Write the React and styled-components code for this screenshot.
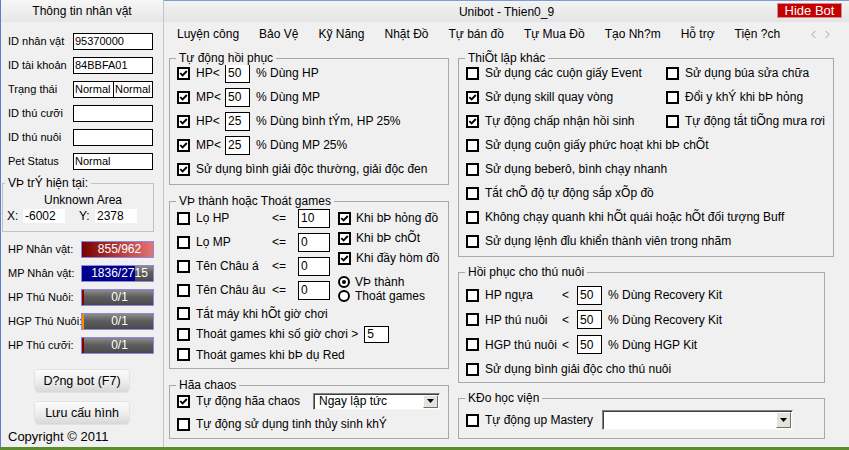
import React from 'react';
import styled, { createGlobalStyle } from 'styled-components';
import { ChevronLeft, ChevronRight } from 'lucide-react';

const GlobalStyle = createGlobalStyle`
  html, body { margin: 0; padding: 0; }
  body {
    background: #5d8c2c;
    font-family: "Liberation Sans", Arial, sans-serif;
    font-size: 12px;
    color: #000;
  }
`;

const tabs = ['Luyện công', 'Bảo Vệ', 'Kỹ Năng', 'Nhặt Đồ', 'Tự bán đồ', 'Tự Mua Đồ', 'Tạo Nh?m', 'Hỗ trợ', 'Tiện ?ch'];

const infoRows = [
  { label: 'ID nhân vật', values: ['95370000'] },
  { label: 'ID tài khoản', values: ['84BBFA01'] },
  { label: 'Trạng thái', values: ['Normal', 'Normal'] },
  { label: 'ID thú cưỡi', values: [''] },
  { label: 'ID thú nuôi', values: [''] },
  { label: 'Pet Status', values: ['Normal'] },
];

const bars = [
  { label: 'HP Nhân vật:', text: '855/962', fill: 100, color: 'linear-gradient(90deg, #780000, #e47474)' },
  { label: 'MP Nhân vật:', text: '1836/2715', fill: 75, color: '#00008c' },
  { label: 'HP Thú Nuôi:', text: '0/1', fill: 3, color: '#8a0000' },
  { label: 'HGP Thú Nuôi:', text: '0/1', fill: 3, color: '#ff8a00' },
  { label: 'HP Thú cưỡi:', text: '0/1', fill: 3, color: '#8a0000' },
];

const recover = [
  { label: 'HP<', value: '50', text: '% Dùng HP' },
  { label: 'MP<', value: '50', text: '% Dùng MP' },
  { label: 'HP<', value: '25', text: '% Dùng bình tÝm, HP 25%' },
  { label: 'MP<', value: '25', text: '% Dùng MP 25%' },
];

const potions = [
  { label: 'Lọ HP', value: '10' },
  { label: 'Lọ MP', value: '0' },
  { label: 'Tên Châu á', value: '0' },
  { label: 'Tên Châu âu', value: '0' },
];

const settings = [
  { text: 'Sử dụng các cuộn giấy Event', on: false },
  { text: 'Sử dụng búa sửa chữa', on: false },
  { text: 'Sử dụng skill quay vòng', on: true },
  { text: 'Đổi y khÝ khi bÞ hỏng', on: false },
  { text: 'Tự động chấp nhận hồi sinh', on: true },
  { text: 'Tự động tắt tiÕng mưa rơi', on: false },
  { text: 'Sử dụng cuộn giấy phức hoạt khi bÞ chÕt', on: false, wide: true },
  { text: 'Sử dụng beberô, bình chạy nhanh', on: false, wide: true },
  { text: 'Tắt chÕ độ tự động sắp xÕp đồ', on: false, wide: true },
  { text: 'Không chạy quanh khi hÕt quái hoặc  hÕt đối tượng Buff', on: false, wide: true },
  { text: 'Sử dụng lệnh đỉu khiển thành viên trong nhãm', on: false, wide: true },
];

const petRows = [
  { label: 'HP ngựa', text: '% Dùng Recovery Kit', h: 24 },
  { label: 'HP thú nuôi', text: '% Dùng Recovery Kit', h: 25 },
  { label: 'HGP thú nuôi', text: '% Dùng HGP Kit', h: 25 },
];

function Check({ on }) {
  return (
    <Box>
      {on && (
        <svg width="9" height="9" viewBox="0 0 9 9">
          <path d="M1.3 4.2 L3.6 6.5 L7.8 2" fill="none" stroke="#000" strokeWidth="1.9" />
        </svg>
      )}
    </Box>
  );
}

function Radio({ on }) {
  return <RadioDot $on={on} />;
}

function Combo({ w, h, value }) {
  return (
    <Select $w={w} $h={h}>
      <span>{value}</span>
      <DropBtn>
        <svg width="7" height="4" viewBox="0 0 7 4">
          <polygon points="0,0 7,0 3.5,4" fill="#000" />
        </svg>
      </DropBtn>
    </Select>
  );
}

function App() {
  return (
    <>
      <GlobalStyle />
      <Window>
        <LeftPanel>
          <LeftHeader>Thông tin nhân vật</LeftHeader>
          <InfoList>
            {infoRows.map((r, i) => (
              <InfoRow key={i}>
                <InfoLabel>{r.label}</InfoLabel>
                {r.values.map((v, j) => (
                  <TextBox key={j} $small $w={80 / r.values.length + (r.values.length > 1 && j === 0 ? 1 : 0)} $h={17}>{v}</TextBox>
                ))}
              </InfoRow>
            ))}
          </InfoList>
          <PosBox>
            <Legend $left={2}>VÞ trÝ hiện tại:</Legend>
            <AreaName>Unknown Area</AreaName>
            <CoordRow>
              <CoordLabel>X:</CoordLabel>
              <CoordValue>-6002</CoordValue>
              <CoordLabel $gap>Y:</CoordLabel>
              <CoordValue>2378</CoordValue>
            </CoordRow>
          </PosBox>
          <BarList>
            {bars.map((b, i) => (
              <InfoRow key={i}>
                <BarLabel>{b.label}</BarLabel>
                <BarTrack>
                  <BarFill $bg={b.color} style={{ width: b.fill + '%' }} />
                  <BarText>{b.text}</BarText>
                </BarTrack>
              </InfoRow>
            ))}
          </BarList>
          <ButtonStack>
            <Btn>D?ng bot (F7)</Btn>
            <Btn>Lưu cấu hình</Btn>
          </ButtonStack>
          <Copyright>Copyright © 2011</Copyright>
        </LeftPanel>

        <Main>
          <TitleBar>
            <span />
            <Title>Unibot - Thien0_9</Title>
            <HideBot>Hide Bot</HideBot>
          </TitleBar>
          <TabBar>
            {tabs.map((t) => (
              <Tab key={t}>{t}</Tab>
            ))}
            <Arrows>
              <ChevronLeft size={13} strokeWidth={1.4} color="#888" />
              <ChevronRight size={13} strokeWidth={1.4} color="#888" />
            </Arrows>
          </TabBar>

          <Content>
            <Column $w={280} $gap={16}>
              <Group $pad="2px 7px 3px">
                <Legend>Tự động hồi phục</Legend>
                {recover.map((r, i) => (
                  <Row key={i} $h={24}>
                    <Check on />
                    <Label $w={23}>{r.label}</Label>
                    <TextBox $w={25} $h={19}>{r.value}</TextBox>
                    <span>{r.text}</span>
                  </Row>
                ))}
                <Row $h={24}>
                  <Check on />
                  <span>Sử dụng bình giải độc thường, giải độc đen</span>
                </Row>
              </Group>

              <Group $pad="4px 7px 3px">
                <Legend>VÞ thành hoặc Thoát games</Legend>
                <Split>
                  <div>
                    {potions.map((p, i) => (
                      <Row key={i} $h={24}>
                        <Check />
                        <Label $w={70}>{p.label}</Label>
                        <Label $w={20}>&lt;=</Label>
                        <TextBox $w={32} $h={19}>{p.value}</TextBox>
                      </Row>
                    ))}
                  </div>
                  <SideList>
                    <Row $h={20} $gap={5}><Check on /><span>Khi bÞ hỏng đồ</span></Row>
                    <Row $h={20} $gap={5}><Check on /><span>Khi bÞ chÕt</span></Row>
                    <Row $h={20} $gap={5}><Check on /><span>Khi đầy hòm đồ</span></Row>
                    <RadioGroup>
                      <Row $h={14} $gap={5}><Radio on /><span>VÞ thành</span></Row>
                      <Row $h={14} $gap={5}><Radio /><span>Thoát games</span></Row>
                    </RadioGroup>
                  </SideList>
                </Split>
                <Row $h={21}>
                  <Check />
                  <span>Tắt máy khi hÕt giờ chơi</span>
                </Row>
                <Row $h={20}>
                  <Check />
                  <span>Thoát games khi số giờ chơi &gt;</span>
                  <TextBox $w={25} $h={17}>5</TextBox>
                </Row>
                <Row $h={21}>
                  <Check />
                  <span>Thoát games khi bÞ dụ Red</span>
                </Row>
              </Group>

              <Group $pad="3px 7px 3px">
                <Legend>Hãa chaos</Legend>
                <Row $h={24}>
                  <Check on />
                  <Label $w={111}>Tự động hãa chaos</Label>
                  <Combo w={127} h={17} value="Ngay lập tức" />
                </Row>
                <Row $h={22}>
                  <Check />
                  <span>Tự động sử dụng tinh thủy sinh khÝ</span>
                </Row>
              </Group>
            </Column>

            <Column $w={376} $gap={15}>
              <Group $pad="2px 7px 3px">
                <Legend>ThiÕt lập khác</Legend>
                <SettingsGrid>
                  {settings.map((s, i) => (
                    <Row key={i} $h={24} $wide={s.wide}>
                      <Check on={s.on} />
                      <span>{s.text}</span>
                    </Row>
                  ))}
                </SettingsGrid>
              </Group>

              <Group $pad="10px 7px 1px" $mr={9}>
                <Legend>Hồi phục cho thú nuôi</Legend>
                {petRows.map((p, i) => (
                  <Row key={i} $h={p.h}>
                    <Check />
                    <Label $w={71}>{p.label}</Label>
                    <Label $w={9}>&lt;</Label>
                    <TextBox $w={25} $h={19}>50</TextBox>
                    <span>{p.text}</span>
                  </Row>
                ))}
                <Row $h={24}>
                  <Check />
                  <span>Sử dụng bình giải độc cho thú nuôi</span>
                </Row>
              </Group>

              <Group $pad="9px 7px 6px" $mr={9}>
                <Legend>KÐo học viện</Legend>
                <Row $h={24}>
                  <Check />
                  <Label $w={111}>Tự động up Mastery</Label>
                  <Combo w={191} h={20} value="" />
                </Row>
              </Group>
            </Column>
          </Content>
        </Main>
      </Window>
    </>
  );
}

export default App;

const Window = styled.div`
  width: 849px;
  height: 447px;
  box-sizing: border-box;
  display: flex;
  background: #f0f0f0;
  border-left: 1px solid #5b7fc7;
  overflow: hidden;
`;

const LeftPanel = styled.div`
  width: 163px;
  flex: none;
  box-sizing: border-box;
  border-right: 1px solid #c4c4c4;
  display: flex;
  flex-direction: column;
`;

const LeftHeader = styled.div`
  height: 22px;
  display: flex;
  align-items: center;
  justify-content: center;
  background: linear-gradient(#f7f7f7, #e6e6e6);
  font-size: 12px;
`;

const InfoList = styled.div`
  padding-top: 7px;
`;

const InfoRow = styled.div`
  height: 24px;
  display: flex;
  align-items: center;
  padding-left: 7px;
`;

const InfoLabel = styled.span`
  width: 65px;
  flex: none;
  font-size: 11px;
  white-space: nowrap;
`;

const TextBox = styled.div`
  width: ${(p) => p.$w}px;
  height: ${(p) => p.$h}px;
  flex: none;
  box-sizing: border-box;
  border: 1px solid #000;
  background: #fff;
  padding-left: ${(p) => (p.$small ? 1 : 2)}px;
  font-size: ${(p) => (p.$small ? 11 : 12)}px;
  display: flex;
  align-items: center;
  white-space: nowrap;
  overflow: hidden;
  & + & { margin-left: -1px; }
`;

const PosBox = styled.div`
  position: relative;
  margin: 10px 0 0 1px;
  width: 152px;
  box-sizing: border-box;
  border: 1px solid #c2c2c2;
  padding: 9px 0 8px;
`;

const Legend = styled.span`
  position: absolute;
  top: -8px;
  left: ${(p) => p.$left ?? 6}px;
  padding: 0 3px;
  background: #f0f0f0;
  line-height: 14px;
  white-space: nowrap;
`;

const AreaName = styled.div`
  line-height: 14px;
  text-align: center;
  padding-left: 10px;
`;

const CoordRow = styled.div`
  margin-top: 1px;
  height: 15px;
  display: flex;
  align-items: center;
  padding-left: 4px;
`;

const CoordLabel = styled.span`
  width: 16px;
  margin-left: ${(p) => (p.$gap ? 14 : 0)}px;
`;

const CoordValue = styled.span`
  width: 42px;
  height: 14px;
  background: #fff;
  padding-left: 2px;
  box-sizing: border-box;
  line-height: 14px;
`;

const BarList = styled.div`
  margin-top: 5px;
`;

const BarLabel = styled.span`
  width: 73px;
  flex: none;
  font-size: 11px;
  white-space: nowrap;
`;

const BarTrack = styled.div`
  position: relative;
  width: 73px;
  height: 17px;
  box-sizing: border-box;
  border: 1px solid #8c88dc;
  background: linear-gradient(#8c8c8c, #5e5e5e 45%, #4a4a4a);
  display: flex;
  align-items: center;
  justify-content: center;
  overflow: hidden;
`;

const BarFill = styled.div`
  position: absolute;
  left: 0;
  top: 0;
  bottom: 0;
  min-width: 2px;
  background: ${(p) => p.$bg};
`;

const BarText = styled.span`
  position: relative;
  color: #fff;
  padding-left: 4px;
`;

const ButtonStack = styled.div`
  margin-top: 13px;
  display: flex;
  flex-direction: column;
  align-items: center;
  gap: 10px;
`;

const Btn = styled.button`
  width: 94px;
  height: 22px;
  padding: 0;
  border: none;
  border-radius: 4px;
  background: linear-gradient(#fcfcfc, #ececec 55%, #d8d8d8);
  box-shadow: 0 0 0 1px #e2e2e2;
  font-family: "Liberation Sans", Arial, sans-serif;
  font-size: 12.5px;
  color: #000;
`;

const Copyright = styled.div`
  margin-top: 6px;
  padding-left: 7px;
  line-height: 14px;
  font-size: 13px;
`;

const Main = styled.div`
  flex: 1;
  display: flex;
  flex-direction: column;
  border-top: 1px solid #7d9bd6;
`;

const TitleBar = styled.div`
  height: 21px;
  display: grid;
  grid-template-columns: 1fr auto 1fr;
  align-items: center;
  background: linear-gradient(#f3f3f3, #e4e4e4);
`;

const Title = styled.span`
  font-size: 12px;
`;

const HideBot = styled.div`
  justify-self: end;
  align-self: start;
  margin: 2px 7px 0 0;
  width: 65px;
  height: 15px;
  box-sizing: border-box;
  background: #c40000;
  border: 1px solid #d98a8a;
  color: #fff;
  font-size: 13px;
  display: flex;
  align-items: center;
  justify-content: center;
`;

const TabBar = styled.div`
  height: 24px;
  display: flex;
  align-items: center;
  gap: 20px;
  padding-left: 13px;
`;

const Tab = styled.span`
  white-space: nowrap;
`;

const Arrows = styled.div`
  margin-left: auto;
  margin-right: 15px;
  display: flex;
  gap: 1px;
`;

const Content = styled.div`
  display: flex;
  gap: 9px;
  padding: 12px 0 0 5px;
`;

const Column = styled.div`
  width: ${(p) => p.$w}px;
  display: flex;
  flex-direction: column;
  gap: ${(p) => p.$gap}px;
`;

const Group = styled.div`
  position: relative;
  box-sizing: border-box;
  border: 1px solid #a8a8a8;
  padding: ${(p) => p.$pad};
  margin-right: ${(p) => p.$mr || 0}px;
`;

const Row = styled.div`
  height: ${(p) => p.$h}px;
  display: flex;
  align-items: center;
  gap: ${(p) => p.$gap ?? 6}px;
  white-space: nowrap;
  grid-column: ${(p) => (p.$wide ? '1 / -1' : 'auto')};
`;

const Label = styled.span`
  width: ${(p) => p.$w}px;
  flex: none;
  white-space: nowrap;
`;

const Box = styled.span`
  width: 13px;
  height: 13px;
  flex: none;
  box-sizing: border-box;
  border: 2px solid #000;
  background: #fff;
  display: inline-flex;
  align-items: center;
  justify-content: center;
`;

const RadioDot = styled.span`
  width: 12px;
  height: 12px;
  flex: none;
  box-sizing: border-box;
  border: 2px solid #000;
  border-radius: 50%;
  background: #fff;
  display: inline-flex;
  align-items: center;
  justify-content: center;
  &::after {
    content: '';
    width: 4px;
    height: 4px;
    border-radius: 50%;
    background: ${(p) => (p.$on ? '#000' : 'transparent')};
  }
`;

const Split = styled.div`
  display: flex;
  gap: 8px;
`;

const SideList = styled.div`
  padding-top: 2px;
`;

const RadioGroup = styled.div`
  margin-top: 7px;
`;

const SettingsGrid = styled.div`
  display: grid;
  grid-template-columns: 200px 1fr;
`;

const Select = styled.div`
  width: ${(p) => p.$w}px;
  height: ${(p) => p.$h}px;
  flex: none;
  box-sizing: border-box;
  display: flex;
  align-items: center;
  background: #fff;
  border: 1px solid;
  border-color: #808080 #f4f4f4 #f4f4f4 #808080;
  box-shadow: inset 1px 1px 0 #404040;
  padding: 1px 1px 1px 5px;
`;

const DropBtn = styled.span`
  margin-left: auto;
  width: 15px;
  height: 100%;
  box-sizing: border-box;
  background: #e4e2da;
  border: 1px solid;
  border-color: #fff #6e6e6e #6e6e6e #fff;
  display: flex;
  align-items: center;
  justify-content: center;
`;
